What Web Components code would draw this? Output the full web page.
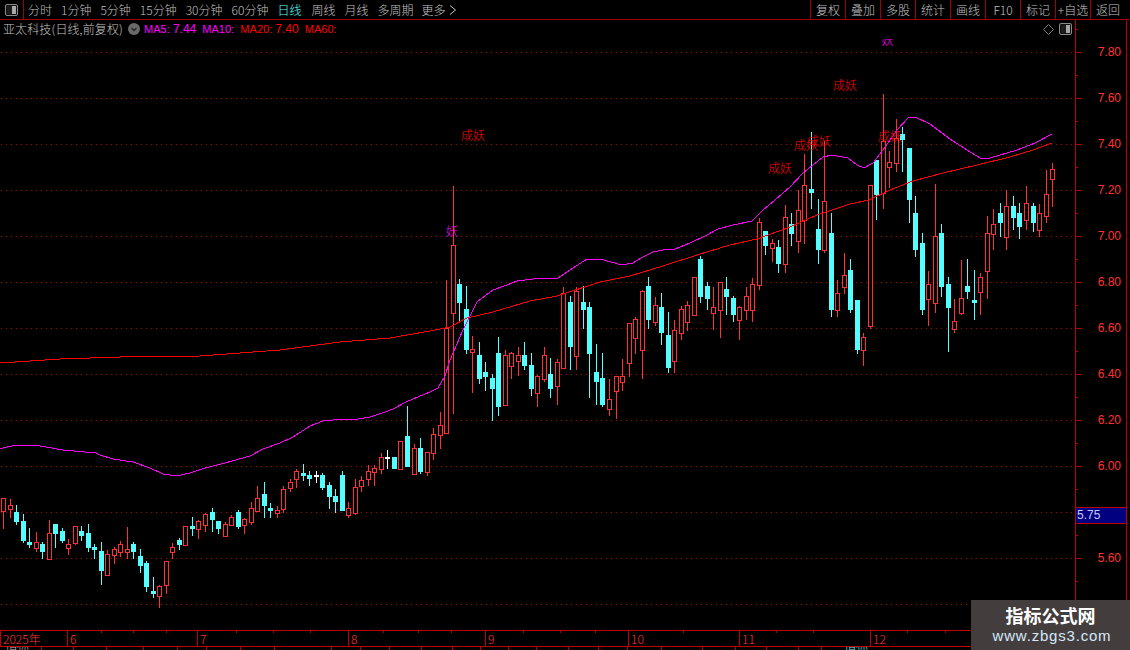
<!DOCTYPE html>
<html><head><meta charset="utf-8">
<style>
html,body{margin:0;padding:0;background:#000;width:1130px;height:650px;overflow:hidden}
body{display:flex;flex-direction:column;position:relative;font-family:"Noto Sans CJK SC","Liberation Sans",sans-serif;color:#c0c0c0}
.main{display:flex;height:610px}
</style></head>
<body>
<app-toolbar></app-toolbar>
<div class="main"><kline-chart></kline-chart><price-axis></price-axis></div>
<time-axis></time-axis>
<bottom-strip></bottom-strip>
<site-watermark>
  <span slot="title">指标公式网</span>
  <span slot="url">www.zbgs3.com</span>
</site-watermark>
<script>
const PANEL=(cls)=>`<svg class="${cls}" width="13" height="12" viewBox="0 0 13 12"><rect x=".5" y=".5" width="12" height="11" rx="1.5" fill="#111" stroke="#8a8a8a"/><rect x="7" y="2" width="4" height="8" fill="#a8a8a8"/><rect x="2" y="2" width="5" height="8" fill="#1c1c1c"/></svg>`;

class AppToolbar extends HTMLElement{
  constructor(){super();const r=this.attachShadow({mode:'open'});
    const left=['分时','1分钟','5分钟','15分钟','30分钟','60分钟','日线','周线','月线','多周期','更多'];
    const right=['复权','叠加','多股','统计','画线','F10','标记','+自选','返回'];
    const extra={'日线':1,'多周期':-1};
    r.innerHTML=`<style>
    :host{display:flex;height:20px;box-sizing:border-box;border-bottom:1px solid #a00000;font:300 12px/19px "Noto Sans CJK SC","Liberation Sans",sans-serif;color:#c0c0c0;flex:none}
    .ico{width:23px;border-right:1px solid #a00000;display:flex;align-items:center;justify-content:center}
    .tabs{display:flex;gap:9px;margin-left:4px;flex:1;white-space:nowrap}
    .tabs span{display:block}
    .on{color:#54ffff}
    svg.chev{margin:5px 0 0 -5px}
    .btns{display:flex;margin-right:5px}
    .btns span{width:35px;border-left:1px solid #a00000;box-sizing:border-box;text-align:center;letter-spacing:0}
    </style>
    <div class="ico">${PANEL('p')}</div>
    <div class="tabs">${left.map(t=>`<span class="${t==='日线'?'on':''}" style="margin-right:${extra[t]||0}px">${t}</span>`).join('')}
      <svg class="chev" width="8" height="10" viewBox="0 0 8 10"><path d="M1 .5 6.500 5 1 9.500" fill="none" stroke="#c0c0c0"/></svg></div>
    <div class="btns">${right.map(t=>`<span>${t}</span>`).join('')}</div>`;
  }
}
customElements.define('app-toolbar',AppToolbar);

class StockHeader extends HTMLElement{
  constructor(){super();const r=this.attachShadow({mode:'open'});
    r.innerHTML=`<style>
    :host{display:flex;align-items:center;height:18px;position:absolute;left:3px;top:0;right:3px;font:300 12px/18px "Noto Sans CJK SC","Liberation Sans",sans-serif;color:#c0c0c0;white-space:nowrap}
    .t{width:125px;letter-spacing:.12px}
    .m{font:11px/18px "Liberation Sans",sans-serif;letter-spacing:.05px}
    .v{font:12px/18px "Liberation Sans",sans-serif;margin:0 6px 0 3px;letter-spacing:0}
    .mg{color:#ff00ff}.rd{color:#ff0000}
    svg{flex:none}
    .c{margin-right:4px}
    .sp{flex:1}
    .d{margin-right:5px}
    .p{margin-right:0}
    .wide{margin-left:0;margin-right:6px}
    </style>
    <span class="t">亚太科技(日线,前复权)</span>
    <svg class="c" width="12" height="12" viewBox="0 0 12 12"><circle cx="6" cy="6" r="6" fill="#6a6a6a"/><path d="M3.500 5 6 7.500 8.500 5" fill="none" stroke="#222" stroke-width="1.3"/></svg>
    <span class="m mg">MA5:</span><span class="v mg">7.44</span>
    <span class="m mg wide">MA10:</span>
    <span class="m rd">MA20:</span><span class="v rd">7.40</span>
    <span class="m rd">MA60:</span>
    <span class="sp"></span>
    <svg class="d" width="11" height="11" viewBox="0 0 11 11"><path d="M5.500 .5 10.500 5.500 5.500 10.500 .5 5.500Z" fill="none" stroke="#7a7a7a"/></svg>
    ${PANEL('p')}`;
  }
}
customElements.define('stock-header',StockHeader);

/* candle data: type, high, bodyTop, bodyBottom, low, in crop units (y = base + v/3) */
const SETS=[
 [440,`R 175 175 212 263|R 178 195 206 230|C 195 216 242 251|C 222 243 300 305|C 264 306 312 320|R 276 306 323 332|C 306 312 333 354|R 240 279 356 356|C 252 252 279 320|C 264 273 300 306|R 297 313 323 342|R 258 258 309 312|C 258 273 285 300|C 252 279 321 333|C 312 321 327 354|C 306 333 390 432|R 330 342 404 404|R 321 327 345 369|R 304 312 335 348|R 261 328 335 354|C 306 312 333 354|C 327 348 375 396|C 363 369 438 453|C 411 453 459 471|R 435 438 468 501|R 363 363 434 459|R 309 321 335 354|C 294 300 312 327|R 258 258 315 315|C 231 258 264 285|R 240 243 266 294|R 219 222 255 273|C 204 216 237 273|C 243 243 264 279|R 246 252 288 288|R 225 231 254 254|C 210 216 258 264|R 234 237 255 279|R 186 204 246 252|R 138 174 212 212|C 126 162 195 231|C 189 204 210 231|R 198 210 218 231|R 138 147 207 216|R 117 126 144 153|R 87 93 117 141`],
 [400,`C 192 219 225 240|C 213 225 234 255|W 213 225 228 246|C 219 225 261 267|C 246 255 288 324|C 267 288 303 336|C 213 225 330 330|R 306 325 345 351|R 237 262 339 342|R 228 240 258 273|R 195 213 237 255|R 195 204 216 255|R 159 171 207 219|W 150 171 174 204|C 171 171 204 204|R 123 123 207 207|C 18 108 198 198|R 132 144 222 222|C 114 144 213 219|R 156 156 216 225|R 84 102 159 177|R 36 75 105 144`],
 [400,`R -360 -216 98 98`],
 [180,`R 18 195 398 700|C 297 312 366 423|C 318 387 507 519|R 468 507 515 636|C 486 525 594 609|C 546 576 588 630|C 582 594 624 720|C 471 519 678 705|R 510 525 675 675|R 516 519 558 594|R 501 525 543 585|C 486 525 555 567|C 519 555 624 645|R 585 588 639 678|R 501 525 597 603|C 534 582 624 651|R 537 546 618 672|R 321 339 564 564|C 348 366 498 567|R 321 333 528 567|C 318 366 387 444|C 366 381 519 651|C 492 576 603 672|C 519 594 672 678|R 597 657 687 705|R 588 588 633 714|R 537 588 606 630|R 429 430 549 588|R 411 417 474 519|R 330 333 510 594`],
 [200,`C 231 258 357 384|R 291 315 366 375|C 279 321 396 432|C 336 405 501 516|R 360 390 483 516|R 318 327 399 417|R 303 315 366 390|R 231 231 345 345|C 168 177 288 306|C 246 258 294 327|R 261 321 339 387|R 246 246 330 411|C 231 267 288 342|C 288 294 342 363|R 318 321 360 417|R 261 288 330 357|R 234 252 330 363|R 54 66 255 267|C 93 93 135 162|R 117 129 144 183|C 120 141 189 216|R 15 51 192 216`],
 [30,`C 549 582 609 645|R 480 540 633 666|R 372 465 570 639|C 306 477 486 534|C 507 597 657 699|R 333 513 660 666|C 549 609 837 858|R 750 789 840 858|R 669 735 771 789|C 687 720 837 846|C 810 810 957 969|R 909 921 960 1005|R 465 465 888 894|C 390 390 492 567|R 192 333 489 534|R 363 396 411 471|R 267 324 399 423|C 291 312 327 423|C 354 354 507 576`],
 [150,`C 138 189 297 318|C 249 279 477 492|R 363 402 447 525|R 102 258 459 486|C 222 249 408 438|C 381 402 471 603|R 447 513 537 546|R 330 444 489 492|C 327 408 423 444|C 360 450 456 507|R 369 381 426 492|R 198 249 363 444|R 177 222 252 297|C 159 189 216 258|R 120 168 261 297|C 138 168 201 237|C 159 189 228 264|R 108 159 210 237|C 159 168 216 243|R 162 189 240 258|R 60 132 198 216|R 39 57 87 168`]
];
const CANDLES=[];
SETS.forEach(([b,s])=>s.split('|').forEach(c=>{const p=c.split(' ');const v=p.slice(1).map(n=>Math.round(b+n/3));CANDLES.push([p[0],...v]);}));

const MA_MAG=[[0,449],[3,448],[16,445],[25,445],[33,445],[46,447],[63,450],[85,452],[96,453],[100,455],[113,459],[133,462],[150,468],[163,474],[176,476],[190,473],[205,468],[225,463],[250,456],[263,449],[280,443],[293,437],[310,426],[323,421],[333,420],[358,419],[370,417],[385,412],[393,409],[406,402],[430,392],[438,388],[445,376],[450,360],[463,330],[477,302],[493,290],[507,285],[517,281],[541,278],[558,278],[570,270],[587,259],[600,259],[622,265],[633,263],[643,257],[653,252],[663,250],[675,249],[690,243],[707,235],[718,229],[733,225],[752,221],[763,210],[775,200],[790,187],[803,173],[823,157],[832,155],[848,158],[857,165],[864,168],[873,163],[883,150],[897,130],[908,118],[915,117],[930,124],[950,139],[967,150],[980,158],[990,158],[1017,150],[1035,143],[1052,134]];
const MA_RED=[[0,363],[30,361],[60,359],[120,357],[200,356],[280,350],[340,342],[390,338],[430,331],[450,327],[467,318],[493,312],[530,301],[557,296],[600,282],[630,276],[663,266],[697,255],[730,245],[757,239],[790,227],[817,215],[850,204],[869,200],[890,190],[913,181],[943,173],[977,165],[1010,157],[1033,150],[1052,143]];
const LABELS=[['成妖',461,140],['成妖',768,173],['成妖',794,150],['成妖',807,146],['成妖',833,90],['成妖',878,141]];

class KlineChart extends HTMLElement{
  constructor(){super();const r=this.attachShadow({mode:'open'});
    let g='';
    for(let y=52;y<=604;y+=46) g+=`<rect x="1" y="${y}" width="1073" height="1" fill="url(#dots)"/>`;
    let c='';
    CANDLES.forEach((d,i)=>{
      const x=Math.floor(3.5+6.516*i),[t,h,top,bot,l]=d;
      const col=t==='R'?'#ff3232':t==='C'?'#54ffff':'#ffffff';
      c+=`<rect x="${x}" y="${h}" width="1" height="${l+1-h}" fill="${col}"/>`;
      if(t==='R') c+=`<rect x="${x-1.5}" y="${top+.5}" width="4" height="${Math.max(bot-top,1)}" fill="#000" stroke="${col}"/>`;
      else c+=`<rect x="${x-2}" y="${top}" width="5" height="${Math.max(bot-top+1,1)}" fill="${col}"/>`;
    });
    const pl=a=>a.map(p=>p.join(',')).join(' ');
    r.innerHTML=`<style>
    :host{display:block;position:relative;width:1075px;height:610px;flex:none;border-right:1px solid #c00000;overflow:hidden}
    svg.plot{display:block}
    text{font-family:"Noto Sans CJK SC","Liberation Sans",sans-serif;font-size:12px;font-weight:300}
    </style>
    <svg class="plot" width="1075" height="610" viewBox="0 20 1075 610" shape-rendering="crispEdges">
      <defs><pattern id="dots" x="1" y="0" width="5" height="1" patternUnits="userSpaceOnUse"><rect width="1" height="1" fill="#b00000"/></pattern></defs>
      ${g}${c}
      <polyline points="${pl(MA_RED)}" fill="none" stroke="#ff0000"/>
      <polyline points="${pl(MA_MAG)}" fill="none" stroke="#ff00ff"/>
      ${LABELS.map(([t,x,y])=>`<text x="${x}" y="${y}" fill="#ff0000">${t}</text>`).join('')}
      <text x="446" y="236" fill="#ff00ff">妖</text>
      <svg x="870" y="39" width="40" height="8" viewBox="870 39 40 8"><text x="881.500" y="45" fill="#ff00ff">妖</text></svg>
    </svg>
    <stock-header></stock-header>`;
  }
}
customElements.define('kline-chart',KlineChart);

class PriceAxis extends HTMLElement{
  constructor(){super();const r=this.attachShadow({mode:'open'});
    const L=['7.80','7.60','7.40','7.20','7.00','6.80','6.60','6.40','6.20','6.00','','5.60',''];
    r.innerHTML=`<style>
    :host{display:block;position:relative;width:50px;height:610px;flex:none;border-right:1px solid #c00000;box-sizing:content-box;font:12px/16px "Liberation Sans",sans-serif;color:#ff3232;overflow:hidden}
    .rows{padding-top:9px}
    .row{height:46px;display:flex;align-items:center;justify-content:flex-end;padding-right:5px;box-sizing:border-box;position:relative}
    .row::before{content:"";position:absolute;left:0;top:23px;width:5px;height:1px;background:#c00000}
    .row::after{content:"";position:absolute;left:0;top:0;width:2px;height:1px;background:#c00000}
    .box{position:absolute;left:0;right:0;top:487px;height:17px;box-sizing:border-box;background:#000080;border-top:1px solid #c00000;border-bottom:1px solid #c00000;color:#c8c8ff;line-height:15px;padding-left:1px}
    </style>
    <div class="rows">${L.map(t=>`<div class="row">${t}</div>`).join('')}</div>
    <div class="box">5.75</div>`;
  }
}
customElements.define('price-axis',PriceAxis);

class TimeAxis extends HTMLElement{
  constructor(){super();const r=this.attachShadow({mode:'open'});
    const segs=[['2025年',67,[]],['6',130,[100,132,165]],['7',151,[235,272,309]],['8',137,[382,417,450]],['9',143,[522,559,594]],['10',111,[682]],['11',131,[775,812]],['12',261,[906,944]]];
    let acc=0;
    const html=segs.map(([t,w,ticks])=>{const s=acc;acc+=w;
      return `<div class="seg" style="width:${w}px">${t}${ticks.map(x=>`<i style="margin-left:${x-s}px"></i>`).join('')}</div>`;}).join('');
    r.innerHTML=`<style>
    :host{display:flex;height:17px;box-sizing:border-box;border-top:1px solid #c00000;border-bottom:1px solid #c00000;flex:none;font:300 12px/15px "Noto Sans CJK SC","Liberation Sans",sans-serif;color:#ff3232;width:1130px}
    .seg{border-left:1px solid #c00000;box-sizing:border-box;padding-left:2px;position:relative;flex:none;white-space:nowrap}
    .seg:first-child{border-left:0;padding-left:3px}
    i{position:absolute;left:0;top:0;width:1px;height:2px;background:#c00000}
    </style>${html}`;
  }
}
customElements.define('time-axis',TimeAxis);

class BottomStrip extends HTMLElement{
  constructor(){super();const r=this.attachShadow({mode:'open'});
    const t=[42,32,33,37,34,29,34,34,57,29,29,32,31,28,28,28,32,30,29,34,41,33,31,32,23];
    r.innerHTML=`<style>
    :host{display:flex;height:3px;overflow:hidden;flex:none;font:300 12px/12px "Noto Sans CJK SC",sans-serif;color:#c0c0c0;white-space:nowrap}
    div{box-sizing:border-box;height:3px;border-right:1px solid #c00000;flex:none;padding-left:5px}
    span{display:block;margin-top:-8px}
    .c{color:#54ffff}
    </style>${t.map((w,i)=>`<div style="width:${w}px">${i==0?'<span>指标</span>':''}</div>`).join('')}<div style="border:0;padding-left:22px"><span class="c">指标</span></div>`;
  }
}
customElements.define('bottom-strip',BottomStrip);

class SiteWatermark extends HTMLElement{
  constructor(){super();const r=this.attachShadow({mode:'open'});
    r.innerHTML=`<style>
    :host{position:absolute;left:971px;top:600px;width:159px;height:50px;background:#433e3d;display:flex;flex-direction:column;align-items:center;justify-content:flex-start}
    .a{font:700 18px/22px "Noto Sans CJK SC",sans-serif;color:#fff;margin-top:4px}
    .b{font:15px/20px "Liberation Sans",sans-serif;color:#d6e8fa;letter-spacing:.8px;margin-left:3px}
    </style><div class="a"><slot name="title"></slot></div><div class="b"><slot name="url"></slot></div>`;
  }
}
customElements.define('site-watermark',SiteWatermark);
</script>
</body></html>
